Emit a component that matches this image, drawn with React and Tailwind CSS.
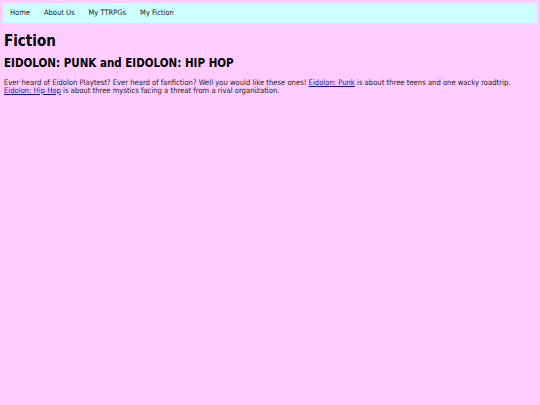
export default function App() {
  return (
    <div
      className="min-h-[405px] bg-[#ffccff] text-black"
      style={{ fontFamily: '"DejaVu Sans Condensed", "DejaVu Sans", Verdana, sans-serif' }}
    >
      <nav className="mx-[3px] pt-[3px]">
        <ul className="flex h-[20px] items-center bg-[#ccffff] px-[7px] text-[7.5px] text-[#222]">
          <li className="mr-[14px]">Home</li>
          <li className="mr-[14px]">About Us</li>
          <li className="mr-[14px]">My TTRPGs</li>
          <li>My Fiction</li>
        </ul>
      </nav>
      <main className="px-[4px]">
        <h1 className="mt-[8px] text-[15px] font-bold leading-[20px]">Fiction</h1>
        <h2 className="mt-[4px] text-[11.5px] font-bold leading-[16px]">
          EIDOLON: PUNK and EIDOLON: HIP HOP
        </h2>
        <p className="mt-[8px] text-[7.6px] leading-[8px] text-[#222]">
          Ever heard of Eidolon Playtest? Ever heard of fanfiction? Well you would like these ones!{" "}
          <a href="#" className="text-[#1a0dab] underline">Eidolon: Punk</a> is about three teens and one wacky roadtrip.
          <br />
          <a href="#" className="text-[#1a0dab] underline">Eidolon: Hip Hop</a> is about three mystics facing a threat from a rival organization.
        </p>
      </main>
    </div>
  );
}
